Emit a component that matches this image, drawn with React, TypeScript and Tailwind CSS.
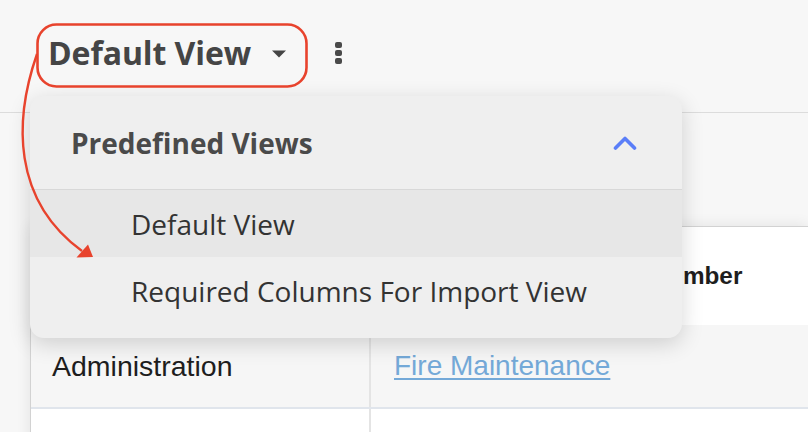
import React from "react";

export default function App() {
  return (
    <div className="relative w-[808px] h-[432px] overflow-hidden bg-[#f7f7f7]">
      {/* Top bar */}
      <header className="h-[113px] border-b border-[#dcdcdc] pl-[48px] pt-[32px]">
        <div className="flex items-center h-[42px]">
          <span className="font-['Open_Sans',sans-serif] font-bold text-[32px] leading-[42px] text-[#454545] tracking-[-0.1px]">
            Default View
          </span>
          <svg className="ml-[20px] mt-[2px]" width="16" height="8" viewBox="0 0 16 8">
            <path d="M1 0.5 L15 0.5 L8 7.5 Z" fill="#454545" />
          </svg>
          <div className="ml-[48px] flex flex-col gap-[2px]">
            <span className="block w-[7px] h-[6px] rounded-[2px] bg-[#4a4a4a]" />
            <span className="block w-[7px] h-[6px] rounded-[2px] bg-[#4a4a4a]" />
            <span className="block w-[7px] h-[6px] rounded-[2px] bg-[#4a4a4a]" />
          </div>
        </div>
      </header>

      {/* Space above table */}
      <div className="h-[113px]" />

      {/* Table */}
      <div className="ml-[30px] bg-white border-l border-t border-[#d2d2d2] shadow-[0_0_14px_rgba(0,0,0,0.09)] font-['Liberation_Sans',Arial,sans-serif]">
        <div className="flex h-[98px]">
          <div className="w-[340px] border-r-2 border-[#e4e4e4]" />
          <div className="flex-1 flex items-center pl-[23px] font-bold text-[24.3px] text-[#1e1e1e] whitespace-nowrap">
            Maintenance Request Number
          </div>
        </div>
        <div className="flex h-[84px] bg-[#f6f6f6] border-b-2 border-[#e0e5ec]">
          <div className="w-[340px] border-r-2 border-[#e4e4e4] flex items-center pl-[21px] text-[28.5px] text-[#1e1e1e]">
            Administration
          </div>
          <div className="flex-1 flex items-center pl-[23px] text-[28px]">
            <a className="text-[#74a9d8] underline underline-offset-[3px] decoration-[2px]">Fire Maintenance</a>
          </div>
        </div>
        <div className="flex h-[60px] bg-white">
          <div className="w-[340px] border-r-2 border-[#e4e4e4]" />
          <div className="flex-1" />
        </div>
      </div>

      {/* Dropdown menu */}
      <div className="absolute left-[30px] top-[96px] w-[652px] rounded-[14px] bg-[#efefef] shadow-[0_6px_22px_rgba(0,0,0,0.16)] overflow-hidden font-['Open_Sans',sans-serif] pb-[14px]">
        <div className="h-[94px] border-b border-[#d8d8d8] flex items-center justify-between pl-[41px] pr-[45px]">
          <span className="font-bold text-[28px] text-[#4a4a4a]">Predefined Views</span>
          <svg width="24" height="14" viewBox="0 0 24 14">
            <polyline points="2.5,12 12,2.5 21.5,12" fill="none" stroke="#5a7ef8" strokeWidth="3.6" strokeLinecap="round" strokeLinejoin="round" />
          </svg>
        </div>
        <div className="h-[67px] bg-[#e7e7e7] flex items-center pl-[101px] text-[28px] text-[#333333]">
          Default View
        </div>
        <div className="h-[67px] flex items-center pl-[101px] text-[28px] text-[#333333]">
          Required Columns For Import View
        </div>
      </div>

      {/* Annotation overlay */}
      <svg className="absolute inset-0 pointer-events-none" width="808" height="432" viewBox="0 0 808 432">
        <rect x="37.5" y="24.5" width="269" height="62" rx="19" fill="none" stroke="#e8432d" strokeWidth="2.6" />
        <path d="M37 54 C 14 120, 12 200, 82 251" fill="none" stroke="#e8432d" strokeWidth="2.4" />
        <polygon points="93,257 76.5,257.5 88,244.5" fill="#e8432d" />
      </svg>
    </div>
  );
}
